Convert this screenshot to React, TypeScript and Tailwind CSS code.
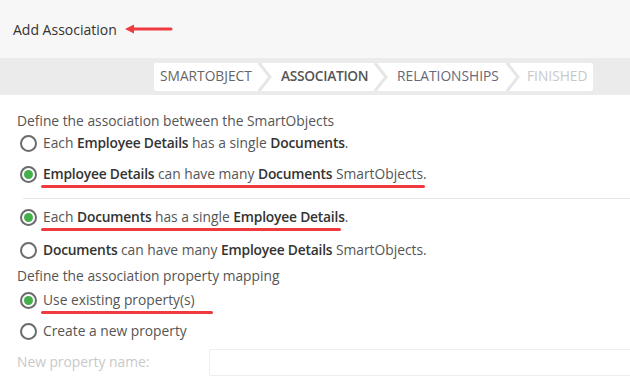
import React from 'react';

type Part = { text: string; bold?: boolean };

function Radio({ checked }: { checked?: boolean }) {
  return (
    <span className="w-[17px] h-[17px] rounded-full border-2 border-[#6b6b6b] bg-white flex items-center justify-center shrink-0">
      {checked && <span className="w-[9px] h-[9px] rounded-full bg-[#43b04a]" />}
    </span>
  );
}

function RadioRow({
  parts,
  checked,
  underline,
  className,
}: {
  parts: Part[];
  checked?: boolean;
  underline?: number;
  className: string;
}) {
  return (
    <div className={`flex items-center pl-[20px] gap-[6px] ${className}`}>
      <Radio checked={checked} />
      <span className="relative whitespace-nowrap">
        {parts.map((p, i) => (
          <span key={i} className={p.bold ? 'font-semibold text-[#333] tracking-[-0.2px]' : ''}>
            {p.text}
          </span>
        ))}
        {underline && (
          <span
            className="absolute left-[-2px] bottom-[-4px] h-[3px] rounded-full bg-[#ef3b3f]"
            style={{ width: underline }}
          />
        )}
      </span>
    </div>
  );
}

function Chevron() {
  return (
    <svg width="14" height="28" viewBox="0 0 14 28" className="shrink-0">
      <polyline points="1,0 12,14 1,28" fill="none" stroke="#e6e6e6" strokeWidth="3" />
    </svg>
  );
}

function Step({ label, width, gap, className }: { label: string; width: number; gap: number; className: string }) {
  return (
    <div className="h-full flex items-center justify-between shrink-0" style={{ width }}>
      <span className={className}>{label}</span>
      <span className="flex" style={{ marginRight: gap }}>
        <Chevron />
      </span>
    </div>
  );
}

export default function App() {
  return (
    <div className="w-[630px] h-[387px] bg-white overflow-hidden font-['Open_Sans',sans-serif] text-[13.8px] text-[#555]">
      {/* Header */}
      <div className="h-[58px] bg-[#f7f7f7] flex items-center pl-[13px]">
        <span className="text-[#333] font-medium text-[14px]">Add Association</span>
        <svg width="48" height="10" viewBox="0 0 48 10" className="ml-[8px]">
          <polygon points="0,5 9,0.5 9,9.5" fill="#ef3b3f" />
          <line x1="8" y1="5" x2="46" y2="5" stroke="#ef3b3f" strokeWidth="3" strokeLinecap="round" />
        </svg>
      </div>

      {/* Steps */}
      <div className="h-[37px] bg-[#ebebeb] flex items-center pl-[154px]">
        <div className="h-[28px] w-[439px] bg-white rounded-[2px] flex items-center pl-[6px] text-[13.75px]">
          <Step label="SMARTOBJECT" width={121} gap={9} className="text-[#666]" />
          <Step label="ASSOCIATION" width={116} gap={9} className="text-[#555] font-semibold tracking-[-0.3px]" />
          <Step label="RELATIONSHIPS" width={130} gap={7} className="text-[#65687a]" />
          <span className="text-[#c8c8c8]">FINISHED</span>
        </div>
      </div>

      {/* Form */}
      <div className="flex flex-col">
        <div className="mt-[16px] h-[20px] flex items-center pl-[17px]">Define the association between the SmartObjects</div>
        <RadioRow
          className="h-[24px]"
          parts={[
            { text: 'Each ' },
            { text: 'Employee Details', bold: true },
            { text: ' has a single ' },
            { text: 'Documents', bold: true },
            { text: '.' },
          ]}
        />
        <RadioRow
          className="mt-[4px] h-[30px]"
          checked
          underline={384}
          parts={[
            { text: 'Employee Details', bold: true },
            { text: ' can have many ' },
            { text: 'Documents', bold: true },
            { text: ' SmartObjects.' },
          ]}
        />
        <div className="mt-[9px] ml-[23px] h-px bg-[#e6e6e6]" />
        <RadioRow
          className="mt-[6px] h-[24px]"
          checked
          underline={300}
          parts={[
            { text: 'Each ' },
            { text: 'Documents', bold: true },
            { text: ' has a single ' },
            { text: 'Employee Details', bold: true },
            { text: '.' },
          ]}
        />
        <RadioRow
          className="mt-[9px] h-[24px]"
          parts={[
            { text: 'Documents', bold: true },
            { text: ' can have many ' },
            { text: 'Employee Details', bold: true },
            { text: ' SmartObjects.' },
          ]}
        />
        <div className="mt-[4px] h-[20px] flex items-center pl-[17px]">Define the association property mapping</div>
        <RadioRow className="mt-[2px] h-[24px]" checked underline={172} parts={[{ text: 'Use existing property(s)' }]} />
        <RadioRow className="mt-[7px] h-[24px]" parts={[{ text: 'Create a new property' }]} />
        <div className="mt-[6px] h-[27px] flex items-center">
          <span className="pl-[17px] w-[209px] text-[#c9c9c9]">New property name:</span>
          <div className="flex-1 h-full border border-r-0 border-[#eeeeee] rounded-l-[2px]" />
        </div>
      </div>
    </div>
  );
}
